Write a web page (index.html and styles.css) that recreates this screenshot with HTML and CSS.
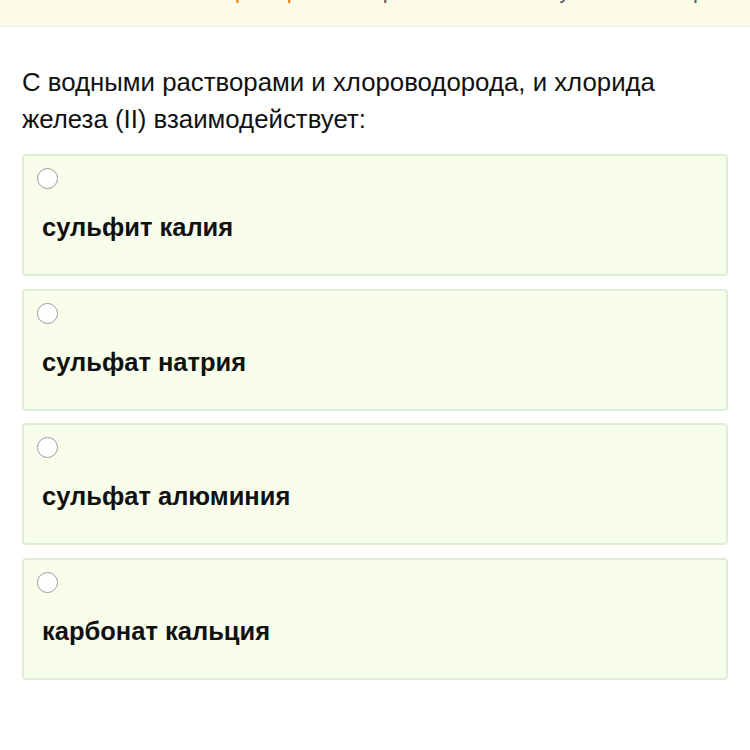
FILE: index.html
```html
<!DOCTYPE html>
<html lang="ru">
<head>
  <meta charset="UTF-8" />
  <title>Задание</title>
  <meta name="viewport" content="width=device-width, initial-scale=1.0" />
  <link rel="stylesheet" href="styles.css">
</head>
<body>

  <header class="topbar">
    <div class="topbar-line">
      <span class="time">23:25</span>
      <span class="hint">Пример</span>
      <span class="note">варианта по химии у экзаменатора</span>
    </div>
  </header>

  <main class="task">
    <p class="question">С водными растворами и хлороводорода, и хлорида железа (II) взаимодействует:</p>

    <ul class="answers">
      <li class="answer">
        <span class="radio"></span>
        <span class="answer-text">сульфит калия</span>
      </li>
      <li class="answer">
        <span class="radio"></span>
        <span class="answer-text">сульфат натрия</span>
      </li>
      <li class="answer">
        <span class="radio"></span>
        <span class="answer-text">сульфат алюминия</span>
      </li>
      <li class="answer">
        <span class="radio"></span>
        <span class="answer-text">карбонат кальция</span>
      </li>
    </ul>
  </main>

</body>
</html>
```

FILE: styles.css
```css
body {
  margin: 0;
  background: #fff;
  font-family: "Liberation Sans", Arial, sans-serif;
  color: #111;
}
.topbar {
  height: 25px;
  overflow: hidden;
  background: #fdfce6;
  border-bottom: 2px solid #f1f1ea;
}
.topbar-line {
  display: flex;
  white-space: nowrap;
  margin-top: -20px;
  padding-left: 22px;
  font-size: 22px;
  line-height: 22px;
  color: #555;
}
.topbar-line .hint {
  margin-left: 142px;
  color: #e8760e;
}
.topbar-line .note {
  margin-left: 60px;
}
.task {
  padding: 37px 22px 0;
}
.question {
  margin: 0 0 16px;
  font-size: 25.8px;
  line-height: 37px;
}
.answers {
  list-style: none;
  margin: 0;
  padding: 0;
  display: flex;
  flex-direction: column;
  gap: 12.7px;
}
.answer {
  height: 122px;
  box-sizing: border-box;
  padding: 12px 18px 0 13px;
  background: #f8fdec;
  border: 2px solid #dfedd2;
  border-radius: 4px;
}
.radio {
  display: block;
  width: 19px;
  height: 19px;
  border: 1px solid #9a9a9a;
  border-radius: 50%;
  background: #fff;
}
.answer-text {
  display: block;
  margin-top: 23px;
  padding-left: 5px;
  font-size: 25.5px;
  line-height: 30px;
  font-weight: bold;
}
```
